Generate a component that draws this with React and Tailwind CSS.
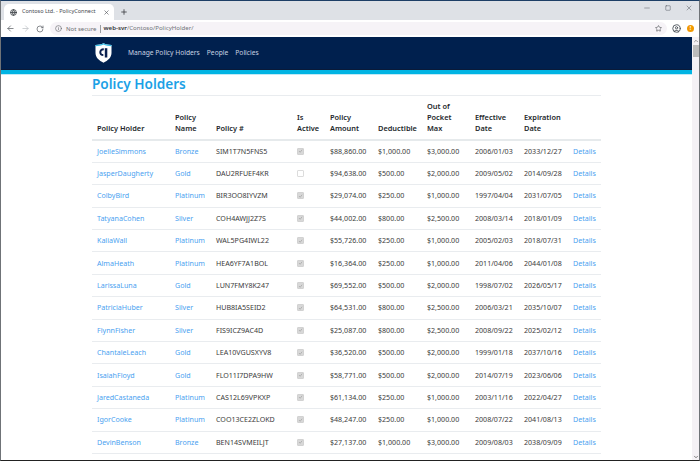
import { ArrowLeft, ArrowRight, RotateCw, Info, Star, Plus, X, Minus, Square, Globe, CircleUser, ChevronUp, ChevronDown } from "lucide-react";

const rows = [
  ["JoelleSimmons", "Bronze", "SIM1T7N5FNS5", true, "$88,860.00", "$1,000.00", "$3,000.00", "2006/01/03", "2033/12/27"],
  ["JasperDaugherty", "Gold", "DAU2RFUEF4KR", false, "$94,638.00", "$500.00", "$2,000.00", "2009/05/02", "2014/09/28"],
  ["ColbyBird", "Platinum", "BIR3OO8IYVZM", true, "$29,074.00", "$250.00", "$1,000.00", "1997/04/04", "2031/07/05"],
  ["TatyanaCohen", "Silver", "COH4AWJJ2Z7S", true, "$44,002.00", "$800.00", "$2,500.00", "2008/03/14", "2018/01/09"],
  ["KaliaWall", "Platinum", "WAL5PG4IWL22", true, "$55,726.00", "$250.00", "$1,000.00", "2005/02/03", "2018/07/31"],
  ["AlmaHeath", "Platinum", "HEA6YF7A1BOL", true, "$16,364.00", "$250.00", "$1,000.00", "2011/04/06", "2044/01/08"],
  ["LarissaLuna", "Gold", "LUN7FMY8K247", true, "$69,552.00", "$500.00", "$2,000.00", "1998/07/02", "2026/05/17"],
  ["PatriciaHuber", "Silver", "HUB8IA5SEID2", true, "$64,531.00", "$800.00", "$2,500.00", "2006/03/21", "2035/10/07"],
  ["FlynnFisher", "Silver", "FIS9ICZ9AC4D", true, "$25,087.00", "$800.00", "$2,500.00", "2008/09/22", "2025/02/12"],
  ["ChantaleLeach", "Gold", "LEA10VGUSXYV8", true, "$36,520.00", "$500.00", "$2,000.00", "1999/01/18", "2037/10/16"],
  ["IsaiahFloyd", "Gold", "FLO11I7DPA9HW", true, "$58,771.00", "$500.00", "$2,000.00", "2014/07/19", "2023/06/06"],
  ["JaredCastaneda", "Platinum", "CAS12L69VPKXP", true, "$61,134.00", "$250.00", "$1,000.00", "2003/11/16", "2022/04/27"],
  ["IgorCooke", "Platinum", "COO13CE2ZLOKD", true, "$48,247.00", "$250.00", "$1,000.00", "2008/07/22", "2041/08/13"],
  ["DevinBenson", "Bronze", "BEN14SVMEILJT", true, "$27,137.00", "$1,000.00", "$3,000.00", "2009/08/03", "2038/09/09"],
];

const headers = [
  ["Policy Holder", "w-[78px]"],
  ["Policy Name", "w-[41px]"],
  ["Policy #", "w-[81px]"],
  ["Is Active", "w-[33px]"],
  ["Policy Amount", "w-[48px]"],
  ["Deductible", "w-[49px]"],
  ["Out of Pocket Max", "w-[48px]"],
  ["Effective Date", "w-[49px]"],
  ["Expiration Date", "w-[49px]"],
  ["", "w-[33px]"],
];

function Checkbox({ on }) {
  return (
    <span className={`flex h-[7px] w-[7px] items-center justify-center rounded-[1px] border ${on ? "border-[#d2d2d2] bg-[#d8d8d8]" : "border-[#dcdcdc] bg-white"}`}>
      {on && (
        <svg viewBox="0 0 8 8" className="h-[6px] w-[6px]" fill="none" stroke="#a6a6a6" strokeWidth="1.2">
          <path d="M1.5 4l2 2 3-4" />
        </svg>
      )}
    </span>
  );
}

function Logo() {
  return (
    <svg viewBox="0 0 17 20" className="h-[20px] w-[17px]">
      <path d="M.5 2C3.500 2 6.500 1.500 8.500.3c2 1.200 5 1.700 8 1.700v8c0 4.500-3.500 7.500-8 9.700-4.500-2.200-8-5.200-8-9.700z" fill="#ffffff" />
      <path d="M.5 2C3.500 2 6.500 1.500 8.500.3c2 1.200 5 1.700 8 1.700v1.200c-3 0-6-.5-8-1.600-2 1.100-5 1.600-8 1.600z" fill="#35bce6" />
      <path d="M8.800 5.200C5.800 5.300 4.300 7 4.300 9.200c0 2.300 1.500 3.800 4 3.800v-1.900c-1.300 0-2-.7-2-1.900s.8-1.900 2.500-2z" fill="#0b2150" />
      <path d="M9.800 5.200h2.500v9.300H9.800z" fill="#0b2150" />
    </svg>
  );
}

export default function App() {
  return (
    <div className="flex h-[461px] w-[700px] flex-col overflow-hidden border-x border-t border-b border-x-[#6f7377] border-t-[#1d3f66] border-b-[#222222] bg-white font-['Noto_Sans',sans-serif] text-[#3b3b3b]">
      <div className="flex h-[19px] shrink-0 items-end bg-[#dee1e6] pl-[3px]">
        <div className="flex h-[16px] w-[110px] items-center rounded-t-[5px] bg-white pl-[6px] pr-[4px] text-[#45494e]">
          <Globe size={7} strokeWidth={3} className="shrink-0" />
          <span className="ml-[5px] flex-1 text-[5.500px] leading-none whitespace-nowrap">Contoso Ltd. - PolicyConnect</span>
          <X size={7} strokeWidth={2} />
        </div>
        <Plus size={8} strokeWidth={2.500} className="mb-[4px] ml-[6px] text-[#3c4043]" />
        <div className="mb-[8px] ml-auto flex items-center gap-[14px] pr-[6px] text-[#555a60]">
          <Minus size={8} strokeWidth={1.500} />
          <Square size={6} strokeWidth={2} />
          <X size={8} strokeWidth={1.500} />
        </div>
      </div>

      <div className="flex h-[17px] shrink-0 items-center bg-white pl-[5px] pr-[5px]">
        <ArrowLeft size={9} strokeWidth={2} className="text-[#5f6368]" />
        <ArrowRight size={9} strokeWidth={2} className="ml-[6px] text-[#bdc1c6]" />
        <RotateCw size={8} strokeWidth={2.200} className="ml-[6px] text-[#5f6368]" />
        <div className="ml-[6px] flex h-[13px] flex-1 items-center rounded-full bg-[#f6f3f7] pl-[5px] pr-[5px]">
          <Info size={7} strokeWidth={2} className="text-[#5f6368]" />
          <span className="ml-[4px] text-[6px] leading-none text-[#6b6f73]">Not secure</span>
          <span className="mx-[3px] h-[8px] w-px bg-[#9a9da1]" />
          <span className="text-[6.100px] leading-none text-[#707478]"><span className="font-semibold text-[#303336]">web-svr</span>/Contoso/PolicyHolder/</span>
          <Star size={7} strokeWidth={2} className="ml-auto text-[#45494e]" />
        </div>
        <CircleUser size={9} strokeWidth={2.400} className="ml-[5px] text-[#4a5058]" />
        <span className="ml-[6px] flex h-[7px] w-[7px] items-center justify-center rounded-full bg-[#f29900] text-[5px] font-bold leading-none text-white">!</span>
      </div>

      <div className="flex min-h-0 flex-1">
        <main className="min-w-0 flex-1">
          <nav className="flex h-[33px] items-center border-b border-[#0a1a38] bg-[#00204e] pl-[94px]">
            <Logo />
            <div className="ml-[16px] flex gap-[7px] text-[6.700px] leading-none text-[#c9d3e2]">
              <span>Manage Policy Holders</span>
              <span>People</span>
              <span>Policies</span>
            </div>
          </nav>
          <div className="h-[5px] border-b border-[#bfe9f6] bg-[#00b4e3]" />

          <div className="ml-[91px] w-[509px]">
            <h1 className="border-b border-[#e9ecef] pb-[2px] text-[13.600px] font-semibold leading-[18px] text-[#1ba1e6]">Policy Holders</h1>
            <table className="mt-[5px] w-full table-fixed border-collapse text-[7.100px] leading-[11px]">
              <thead>
                <tr className="border-b-2 border-[#e6eaec]">
                  {headers.map(([label, width]) => (
                    <th key={label || "actions"} className={`${width} px-[5px] pb-[5px] pt-0 text-left align-bottom text-[7.400px] font-semibold text-[#24282c]`}>{label}</th>
                  ))}
                </tr>
              </thead>
              <tbody>
                {rows.map((r) => (
                  <tr key={r[0]} className="h-[22.400px] border-b border-[#e9ecef]">
                    <td className="px-[5px] text-[#4a9ff0]">{r[0]}</td>
                    <td className="px-[5px] text-[#4a9ff0]">{r[1]}</td>
                    <td className="whitespace-nowrap px-[5px]">{r[2]}</td>
                    <td className="px-[5px]"><Checkbox on={r[3]} /></td>
                    <td className="px-[5px]">{r[4]}</td>
                    <td className="px-[5px]">{r[5]}</td>
                    <td className="px-[5px]">{r[6]}</td>
                    <td className="whitespace-nowrap px-[5px]">{r[7]}</td>
                    <td className="whitespace-nowrap px-[5px]">{r[8]}</td>
                    <td className="px-[5px] text-[#4a9ff0]">Details</td>
                  </tr>
                ))}
              </tbody>
            </table>
          </div>
        </main>

        <div className="flex w-[7px] shrink-0 flex-col items-center bg-[#f4f1f5]">
          <ChevronUp size={6} strokeWidth={3} className="mt-[1px] text-[#7a7a7a]" />
          <div className="mt-[1px] h-[12px] w-[6px] bg-[#bcbcbc]" />
          <ChevronDown size={6} strokeWidth={3} className="mt-auto text-[#555555]" />
        </div>
      </div>
    </div>
  );
}
